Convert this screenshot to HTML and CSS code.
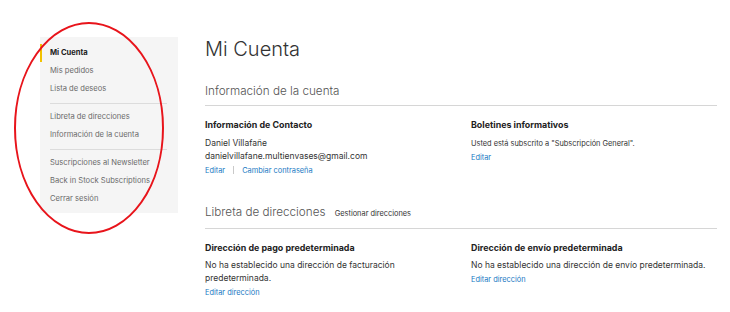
FILE: index.html
```html
<!DOCTYPE html>
<html lang="es">
<head>
<meta charset="utf-8">
<title>Mi Cuenta</title>
<link rel="stylesheet" href="styles.css">
</head>
<body>
<div class="page">
  <nav class="sidebar">
    <ul class="nav">
      <li class="item active">Mi Cuenta</li>
      <li class="item">Mis pedidos</li>
      <li class="item">Lista de deseos</li>
      <li class="divider"></li>
      <li class="item">Libreta de direcciones</li>
      <li class="item">Información de la cuenta</li>
      <li class="divider"></li>
      <li class="item">Suscripciones al Newsletter</li>
      <li class="item">Back in Stock Subscriptions</li>
      <li class="item">Cerrar sesión</li>
    </ul>
  </nav>
  <main class="main">
    <h1 class="page-title">Mi Cuenta</h1>

    <div class="block-title first">Información de la cuenta</div>
    <div class="columns">
      <div class="box">
        <div class="box-title">Información de Contacto</div>
        <div class="box-content">
          <div>Daniel Villafañe</div>
          <div>danielvillafane.multienvases@gmail.com</div>
        </div>
        <div class="actions"><a class="link">Editar</a><span class="sep"></span><a class="link">Cambiar contraseña</a></div>
      </div>
      <div class="box">
        <div class="box-title">Boletines informativos</div>
        <div class="box-content"><div class="small">Usted está subscrito a "Subscripción General".</div></div>
        <div class="actions"><a class="link">Editar</a></div>
      </div>
    </div>

    <div class="block-title second">Libreta de direcciones <a class="manage">Gestionar direcciones</a></div>
    <div class="columns">
      <div class="box">
        <div class="box-title">Dirección de pago predeterminada</div>
        <div class="box-content addr">No ha establecido una dirección de facturación predeterminada.</div>
        <div class="actions"><a class="link">Editar dirección</a></div>
      </div>
      <div class="box">
        <div class="box-title">Dirección de envío predeterminada</div>
        <div class="box-content addr">No ha establecido una dirección de envío predeterminada.</div>
        <div class="actions"><a class="link">Editar dirección</a></div>
      </div>
    </div>
  </main>
</div>
<svg class="circle" width="730" height="312" viewBox="0 0 730 312" xmlns="http://www.w3.org/2000/svg">
  <ellipse cx="89" cy="128" rx="74" ry="105" fill="none" stroke="#e8141b" stroke-width="2"/>
</svg>
</body>
</html>
```
FILE: styles.css
```css
* { box-sizing: border-box; }
html, body { margin: 0; padding: 0; background: #fff; }
body {
  font-family: Inter, "Noto Sans", "Liberation Sans", sans-serif;
  color: #333;
  width: 730px;
  height: 312px;
  overflow: hidden;
  position: relative;
}
.page {
  display: flex;
  align-items: flex-start;
  padding: 37px 0 0 40px;
}
.sidebar {
  width: 138px;
  background: #f5f5f5;
  padding: 7px 0 5px;
  flex: none;
}
.nav { list-style: none; margin: 0; padding: 0; }
.item {
  height: 18px;
  line-height: 18px;
  font-size: 7.6px;
  color: #6b6b6b;
  padding-left: 8px;
  border-left: 2px solid transparent;
}
.item.active {
  border-left-color: #f2c200;
  color: #222;
  font-weight: 700;
}
.divider {
  height: 1px;
  background: #dcdcdc;
  margin: 5px 11px 4px 10px;
}
.main {
  margin-left: 27px;
  width: 512px;
}
.page-title {
  margin: 0;
  font-size: 20px;
  line-height: 24px;
  font-weight: 300;
  color: #333;
}
.block-title {
  font-size: 11.7px;
  line-height: 16px;
  font-weight: 300;
  color: #555;
  padding-bottom: 6px;
  border-bottom: 1px solid #d6d6d6;
}
.block-title.first { margin-top: 22px; }
.block-title.second { margin-top: 27px; }
.manage {
  font-size: 7.4px;
  color: #333;
  font-weight: 400;
  margin-left: 6px;
}
.columns {
  display: grid;
  grid-template-columns: 266px 1fr;
  margin-top: 13px;
}
.box-title {
  font-size: 8.9px;
  line-height: 12px;
  font-weight: 700;
  color: #222;
}
.box-content {
  margin-top: 5.5px;
  font-size: 8.5px;
  line-height: 13px;
  color: #333;
}
.box-content .small { font-size: 7.4px; }
.box-content.addr { width: 240px; }
.actions {
  margin-top: 1px;
  font-size: 7.4px;
  line-height: 13px;
  display: flex;
  align-items: center;
}
.link { color: #1979c3; }
.sep {
  width: 1px;
  height: 8px;
  background: #c9c9c9;
  margin: 0 8px;
}
.circle {
  position: absolute;
  left: 0;
  top: 0;
  pointer-events: none;
}
```
